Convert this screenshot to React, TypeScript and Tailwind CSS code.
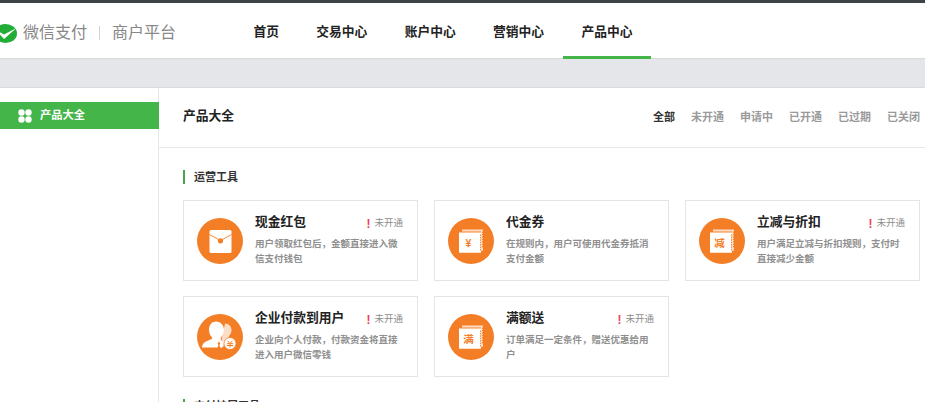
const fontStack = 'font-["Liberation_Sans","Noto_Sans_CJK_SC",sans-serif]'

type IconKind = 'envelope' | 'coupon' | 'reduce' | 'users' | 'full'

interface Product {
  title: string;
  desc: string;
  icon: IconKind;
  status?: string;
}

const row1: Product[] = [
  { title: '现金红包', desc: '用户领取红包后，金额直接进入微信支付钱包', icon: 'envelope', status: '未开通' },
  { title: '代金券', desc: '在规则内，用户可使用代金券抵消支付金额', icon: 'coupon' },
  { title: '立减与折扣', desc: '用户满足立减与折扣规则，支付时直接减少金额', icon: 'reduce', status: '未开通' },
]

const row2: Product[] = [
  { title: '企业付款到用户', desc: '企业向个人付款，付款资金将直接进入用户微信零钱', icon: 'users', status: '未开通' },
  { title: '满额送', desc: '订单满足一定条件，赠送优惠给用户', icon: 'full', status: '未开通' },
]

const navItems = ['首页', '交易中心', '账户中心', '营销中心', '产品中心']
const filters = ['全部', '未开通', '申请中', '已开通', '已过期', '已关闭']

function Ticket({ label }: { label: string }) {
  return (
    <svg viewBox="0 0 46 46" className="h-full w-full">
      <path d="M14 11.500h21v1.500l-1.200 1.200 1.200 1.200-1.200 1.200 1.200 1.200-1.200 1.200 1.200 1.200-1.200 1.200 1.200 1.200-1.200 1.200 1.200 1.200-1.200 1.200 1.200 1.200-1.200 1.200 1.200 1.200v3h-2V13.500H14z" fill="#fff" opacity="0.75" />
      <path d="M11 14.500h22v1.500l-1.200 1.200 1.200 1.200-1.200 1.200 1.200 1.200-1.200 1.200 1.200 1.200-1.200 1.200 1.200 1.200-1.200 1.200 1.200 1.200-1.200 1.200 1.200 1.200-1.200 1.200 1.200 1.400v1.800H11z" fill="#fff" />
      <text x="20.500" y="28.500" textAnchor="middle" fontSize="10.500" fontWeight="700" fill="#f47e26" fontFamily="Liberation Sans, Noto Sans CJK SC, sans-serif">{label}</text>
    </svg>
  )
}

function ProductIcon({ kind }: { kind: IconKind }) {
  return (
    <div className="h-[46px] w-[46px] shrink-0 rounded-full bg-[#f47e26]">
      {kind === 'envelope' && (
        <svg viewBox="0 0 46 46" className="h-full w-full">
          <rect x="12.500" y="12" width="22" height="23" rx="1.500" fill="#fff" />
          <path d="M12.500 16.500 L23.500 22.500 L34.500 16.500" fill="none" stroke="#f47e26" strokeWidth="0.900" />
          <circle cx="23.500" cy="22.800" r="2.600" fill="#f47e26" />
        </svg>
      )}
      {kind === 'coupon' && <Ticket label="¥" />}
      {kind === 'reduce' && <Ticket label="减" />}
      {kind === 'full' && <Ticket label="满" />}
      {kind === 'users' && (
        <svg viewBox="0 0 46 46" className="h-full w-full">
          <path d="M28 9.500c4 0 6.500 3 6.500 6.500 0 2.500-1 4.500-2.500 6v2l3 1.500-10 8h-2z" fill="#fff" opacity="0.75" />
          <path d="M19 7.500c4.500 0 8 3.500 8 8.500 0 3.200-1.600 6-3.200 7.600v2.900c1.200.8 2.400 1.400 3.600 1.800-1.400 1.500-1.900 3.200-1.900 5.200H5c.2-3 1.400-4.800 3.500-5.800l6.700-2.900v-1.200C13.600 22 12 19.200 12 16c0-5 2.800-8.500 7-8.500z" fill="#fff" />
          <path d="M22 27.500l1.200 2-.8 1.500 1 3h-3l1-3-.8-1.500z" fill="#f47e26" />
          <circle cx="33" cy="29.500" r="6" fill="#fff" stroke="#f47e26" strokeWidth="0.800" />
          <path d="M30.500 26.800l2.500 2.700 2.500-2.700M29.800 29.700h6.400M29.800 31.500h6.400M33 29.500v4" fill="none" stroke="#f47e26" strokeWidth="1" />
        </svg>
      )}
    </div>
  )
}

function ProductCard({ product }: { product: Product }) {
  return (
    <div className="flex h-[81px] w-[235px] items-center border border-[#e4e4e4] bg-white pl-[13px] pr-[14px]">
      <ProductIcon kind={product.icon} />
      <div className="ml-[12px] min-w-0 flex-1">
        <div className="flex h-[18px] items-center justify-between">
          <span className="pb-[4px] text-[12.75px] font-bold text-[#222]">{product.title}</span>
          {product.status && (
            <span className="flex items-center text-[9.5px] text-[#8d8d8d]">
              <span className="mr-[4px] text-[12px] font-bold leading-none text-[#f0405c]">!</span>
              {product.status}
            </span>
          )}
        </div>
        <p className="mt-[3px] h-[31px] w-[145px] text-[9.5px] font-bold leading-[15.5px] text-[#8f8f8f]">
          {product.desc}
        </p>
      </div>
    </div>
  )
}

function SectionTitle({ title }: { title: string }) {
  return (
    <div className="flex h-[14px] items-center border-l-2 border-[#44a44e] pl-[9px] text-[11px] font-bold text-[#333]">
      {title}
    </div>
  )
}

export default function App() {
  return (
    <div className={`${fontStack} h-[402px] w-[925px] overflow-hidden border-t-[3px] border-[#3c4347] bg-white`}>
      <header className="flex h-[55px] items-start">
        <div className="flex h-[55px] w-[234.8px] shrink-0 items-center pt-[5px]">
          <svg viewBox="0 0 23 19" className="-ml-[6px] h-[19px] w-[23px] shrink-0">
            <ellipse cx="11.500" cy="9.500" rx="11.500" ry="9.500" fill="#22ac38" />
            <path d="M2 6l8 4.500L22.500 4 10 15z" fill="#fff" />
          </svg>
          <span className="ml-[6px] text-[16px] leading-none text-[#888]">微信支付</span>
          <span className="mx-[12px] h-[14px] w-px bg-[#d5d5d5]"></span>
          <span className="text-[16px] leading-none text-[#888]">商户平台</span>
        </div>
        <nav className="relative z-10 flex h-[56px]">
          {navItems.map((item, i) => (
            <a
              key={item}
              className={`flex h-full items-center border-b-[3px] px-[18.7px] pt-[5px] text-[12.75px] font-bold text-[#222] ${
                i === navItems.length - 1 ? 'border-[#44b549]' : 'border-transparent'
              }`}
            >
              {item}
            </a>
          ))}
        </nav>
      </header>

      <div className="h-[30px] border-y border-[#d9dadc] bg-[#e5e6ea]"></div>

      <div className="flex">
        <aside className="min-h-[320px] w-[159px] shrink-0 border-r border-[#e7e7eb] pt-[14px]">
          <div className="-mr-px flex h-[27px] items-center bg-[#44b549] pl-[18px] text-white">
            <svg viewBox="0 0 14 14" className="h-[14px] w-[14px]">
              <circle cx="3.500" cy="3.500" r="3.200" fill="#fff" />
              <circle cx="10.500" cy="3.500" r="3.200" fill="#fff" />
              <circle cx="3.500" cy="10.500" r="3.200" fill="#fff" />
              <circle cx="10.500" cy="10.500" r="3.200" fill="#fff" />
            </svg>
            <span className="ml-[8px] text-[11.25px] font-bold">产品大全</span>
          </div>
        </aside>

        <main className="min-w-0 flex-1">
          <div className="flex h-[60px] items-center justify-between border-b border-[#e7e7eb] pl-[24px] pr-[5px]">
            <h2 className="pb-[3px] text-[12.75px] font-bold text-[#222]">产品大全</h2>
            <div className="flex gap-[16px] pb-[1px] text-[11px]">
              {filters.map((f, i) => (
                <span key={f} className={i === 0 ? 'font-bold text-[#333]' : 'font-bold text-[#9a9a9a]'}>
                  {f}
                </span>
              ))}
            </div>
          </div>

          <div className="pl-[24px] pt-[22px]">
            <SectionTitle title="运营工具" />
            <div className="mt-[16px] flex gap-[16px]">
              {row1.map((p) => <ProductCard key={p.title} product={p} />)}
            </div>
            <div className="mt-[15px] flex gap-[16px]">
              {row2.map((p) => <ProductCard key={p.title} product={p} />)}
            </div>
            <div className="mt-[22px]">
              <SectionTitle title="支付扩展工具" />
            </div>
          </div>
        </main>
      </div>
    </div>
  )
}
